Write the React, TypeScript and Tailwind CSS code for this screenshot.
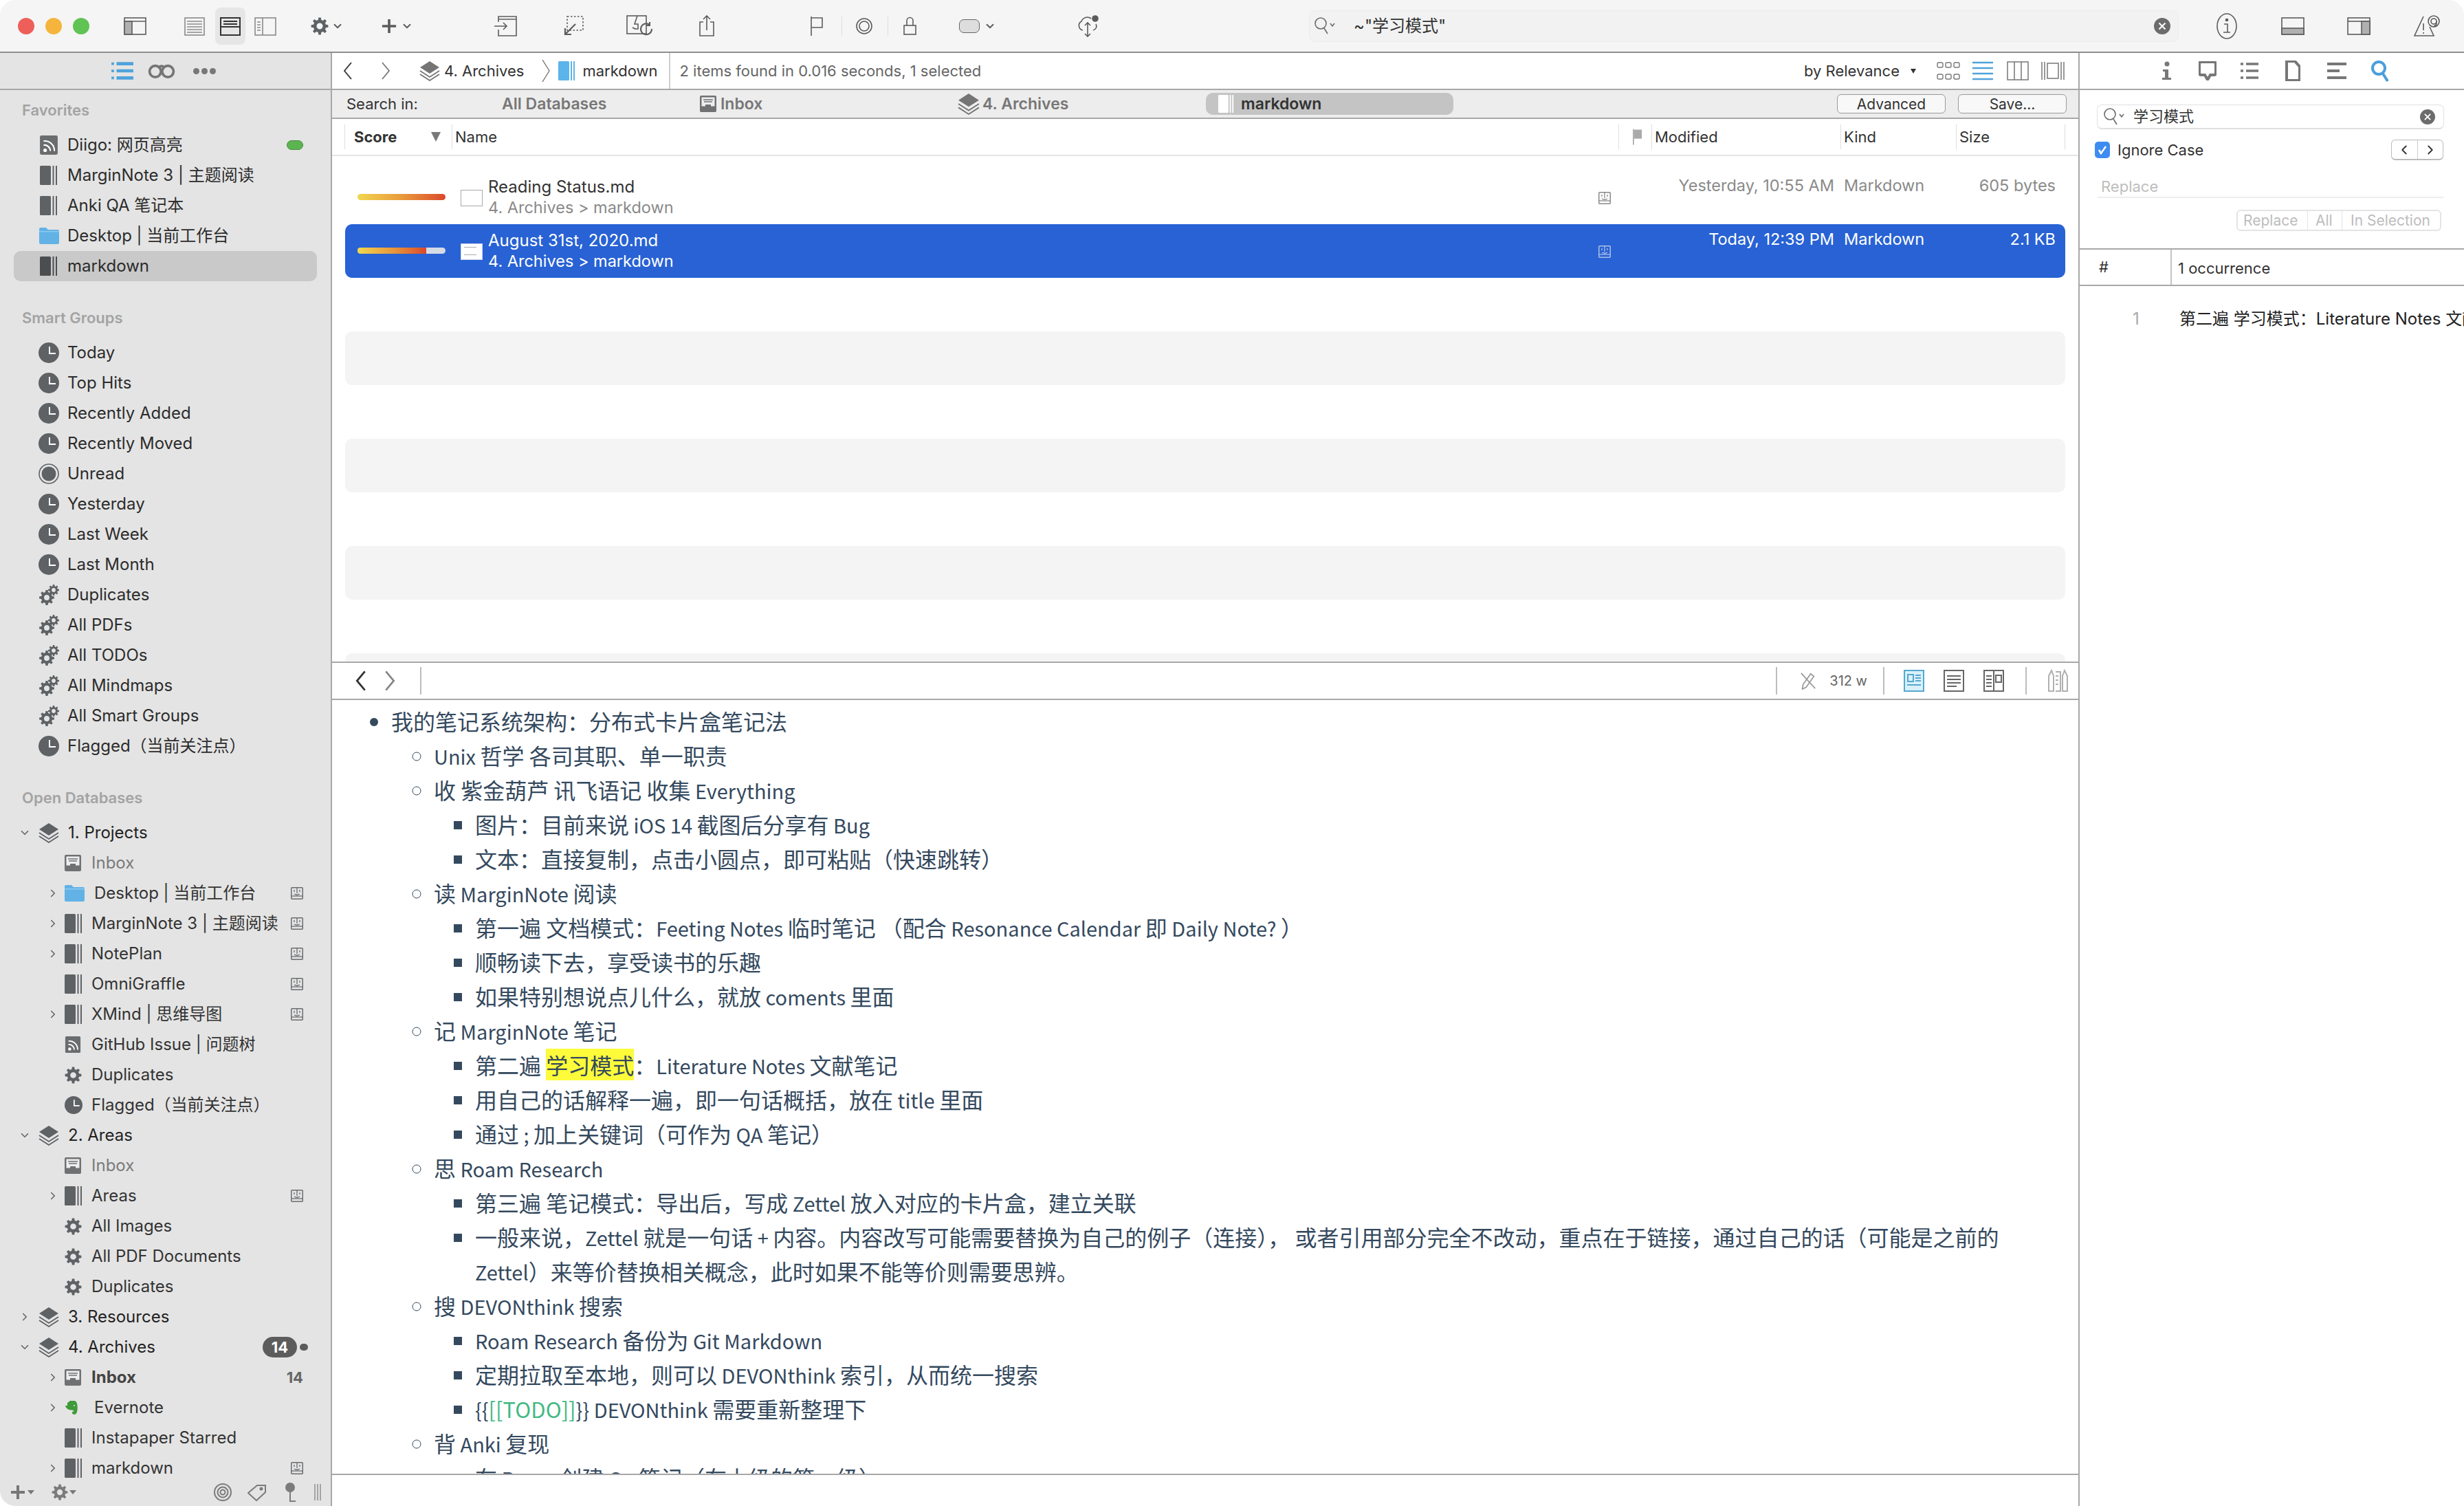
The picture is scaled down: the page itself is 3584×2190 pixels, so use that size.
import React from 'react';
import { ChevronLeft, ChevronRight, ChevronDown } from 'lucide-react';

// gear outline used by toolbar + sidebar
const gearPath = (cx: number, cy: number, r: number, teeth = 8) => {
  let d = '';
  const step = (Math.PI * 2) / teeth;
  for (let i = 0; i < teeth; i++) {
    const a = i * step;
    const pts = [
      [a - step * 0.32, r * 0.74],
      [a - step * 0.18, r],
      [a + step * 0.18, r],
      [a + step * 0.32, r * 0.74],
    ];
    pts.forEach(([t, rad]) => {
      d += `${d ? 'L' : 'M'}${(cx + Math.cos(t) * rad).toFixed(2)} ${(cy + Math.sin(t) * rad).toFixed(2)}`;
    });
  }
  d += 'Z';
  const h = r * 0.36;
  d += `M${cx + h} ${cy}A${h} ${h} 0 1 0 ${cx - h} ${cy}A${h} ${h} 0 1 0 ${cx + h} ${cy}Z`;
  return d;
};

const Gear = ({ className = 'w-[26px] h-[26px]', color = '#5f6265' }: { className?: string; color?: string }) => (
  <svg viewBox="0 0 26 26" className={className}>
    <path d={gearPath(13, 13, 12.5)} fill={color} fillRule="evenodd" />
  </svg>
);

const Gears = () => (
  <svg viewBox="0 0 29 30" className="w-[29px] h-[30px]">
    <path d={gearPath(11, 19, 11)} fill="#5f6265" fillRule="evenodd" />
    <path d={gearPath(21, 8, 8)} fill="#5f6265" fillRule="evenodd" />
  </svg>
);

const Clock = () => (
  <svg viewBox="0 0 30 30" className="w-[30px] h-[30px]">
    <circle cx="15" cy="15" r="15" fill="#5f6265" />
    <path d="M16 6v10h9" fill="none" stroke="#fff" strokeWidth="2" />
  </svg>
);

const Unread = () => (
  <svg viewBox="0 0 30 30" className="w-[30px] h-[30px]">
    <circle cx="15" cy="15" r="14" fill="none" stroke="#5f6265" strokeWidth="1.6" />
    <circle cx="15" cy="15" r="10.5" fill="#5f6265" />
  </svg>
);

const Group = ({ color = '#5f6265' }: { color?: string }) => (
  <svg viewBox="0 0 26 28" className="w-[26px] h-[28px]">
    <rect x="0" y="0" width="16" height="28" rx="1.5" fill={color} />
    <rect x="18.5" y="0" width="2" height="28" fill={color} />
    <rect x="23" y="0" width="2" height="28" fill={color} />
  </svg>
);

const Rss = ({ className = 'w-[24px] h-[26px]' }: { className?: string }) => (
  <svg viewBox="0 0 24 26" className={className}>
    <rect width="24" height="26" rx="2" fill="#6a6c6e" />
    <circle cx="7" cy="20" r="2.4" fill="#fff" />
    <path d="M5 13a8 8 0 0 1 9 8M5 7.5a13 13 0 0 1 14.5 13.5" fill="none" stroke="#fff" strokeWidth="2" />
  </svg>
);

const InboxIcon = ({ className = 'w-[24px] h-[24px]', tint = '#6f7173' }: { className?: string; tint?: string }) => (
  <svg viewBox="0 0 24 24" className={className}>
    <rect width="24" height="24" rx="2" fill={tint} />
    <rect x="2.5" y="2.5" width="19" height="13" fill="#eee" />
    <path d="M5 6h14M6 9h12" stroke={tint} strokeWidth="1.4" />
    <path d="M8 13h8v3.5H8z" fill={tint} />
  </svg>
);

const Stack = ({ className = 'w-[30px] h-[30px]', color = '#5f6265' }: { className?: string; color?: string }) => (
  <svg viewBox="0 0 30 30" className={className}>
    <path d="M15 1 29 10 15 19 1 10Z" fill={color} />
    <path d="M1 15l14 9 14-9M1 20l14 9 14-9" fill="none" stroke={color} strokeWidth="1.8" />
  </svg>
);

const Folder = ({ className = 'w-[29px] h-[24px]' }: { className?: string }) => (
  <svg viewBox="0 0 29 24" className={className}>
    <path d="M0 2a2 2 0 0 1 2-2h8l3 3h14a2 2 0 0 1 2 2v17a2 2 0 0 1-2 2H2a2 2 0 0 1-2-2Z" fill="#62b2e6" />
    <rect x="0" y="5" width="29" height="1.4" fill="#8fcaf0" />
  </svg>
);

const Evernote = () => (
  <svg viewBox="0 0 20 22" className="w-[20px] h-[22px]">
    <path d="M4 4 8 1h6c3 0 4 3 4.500 7 .5 5 0 10-2 12-2 1.500-5 1-5.500-1-.5-2 1-3 3-2.500-1-2-3-2-5-2C5 14 2 12 1 8h3Z" fill="#3f9a38" />
    <circle cx="14" cy="8" r="1" fill="#e4e4e4" />
  </svg>
);

const SyncBook = ({ color = '#6a6c6e' }: { color?: string }) => (
  <svg viewBox="0 0 18 18" className="w-[18px] h-[18px] shrink-0">
    <rect x=".75" y=".75" width="16.500" height="16.500" rx="1" fill="none" stroke={color} strokeWidth="1.500" />
    <path d="M1 13h16" stroke={color} strokeWidth="1.300" />
    <path d="M9 1v8" stroke={color} strokeWidth="1.300" />
    <path d="M5 4v3M13 4v3M5 10q4 2.500 8 0" fill="none" stroke={color} strokeWidth="1.300" />
  </svg>
);

const ToolIcon = ({ w, h = 28, className = '', children }: { w: number; h?: number; className?: string; children: React.ReactNode }) => (
  <svg viewBox={`0 0 ${w} ${h}`} width={w} height={h} className={`shrink-0 ${className}`} fill="none" stroke="#5c5c5c" strokeWidth="1.600">
    {children}
  </svg>
);

const ClearX = ({ size = 'w-[24px] h-[24px]' }: { size?: string }) => (
  <svg viewBox="0 0 24 24" className={size}>
    <circle cx="12" cy="12" r="12" fill="#6c6c6c" />
    <path d="M7.500 7.500l9 9M16.500 7.500l-9 9" stroke="#fff" strokeWidth="2" />
  </svg>
);

const SearchGlyph = () => (
  <svg viewBox="0 0 32 30" className="w-[32px] h-[30px] shrink-0" fill="none" stroke="#6c6c6c" strokeWidth="1.600">
    <circle cx="10" cy="11" r="8" />
    <path d="M15 18l5 8" />
    <path d="M24 11l3 4 3-4" />
  </svg>
);

// the tall thin back/forward angle used in the path and preview bars
const Angle = ({ dir, className, color, weight = 1.8 }: { dir: 'l' | 'r'; className: string; color: string; weight?: number }) => (
  <svg viewBox="0 0 14 26" className={className} fill="none" stroke={color} strokeWidth={weight}>
    <path d={dir === 'l' ? 'M12 1 2 13l10 12' : 'M2 1l10 12L2 25'} />
  </svg>
);

const Toolbar = () => (
  <div className="h-[75px] shrink-0 bg-[#f5f5f5] flex items-center pl-[26px] text-[#5c5c5c]">
    <div className="w-[24px] h-[24px] rounded-full bg-[#ee5f5a]" />
    <div className="w-[24px] h-[24px] rounded-full bg-[#f5b53d] ml-[16px]" />
    <div className="w-[24px] h-[24px] rounded-full bg-[#5fc454] ml-[16px]" />
    <ToolIcon w={33} className="ml-[50px]">
      <rect x="1" y="2" width="31" height="24" />
      <path d="M1 7h31" />
      <rect x="1" y="7" width="11" height="19" fill="#b0b0b0" />
    </ToolIcon>
    <ToolIcon w={30} className="ml-[55px]">
      <rect x="1" y="2" width="28" height="25" stroke="#8a8a8a" />
      <path d="M4 7h22M4 11h22M4 15h22M4 19h22M4 23h22" stroke="#8a8a8a" />
    </ToolIcon>
    <div className="ml-[15px] w-[44px] h-[54px] rounded-[8px] bg-[#e6e6e6] flex items-center justify-center">
      <ToolIcon w={30}>
        <rect x="1" y="2" width="28" height="25" stroke="#333" strokeWidth="2" />
        <path d="M1 15h28M5 7h20M5 11h20" stroke="#333" strokeWidth="2" />
      </ToolIcon>
    </div>
    <ToolIcon w={32} className="ml-[13px]">
      <rect x="1" y="2" width="30" height="25" stroke="#8a8a8a" />
      <path d="M12 2v25M4 8h5M4 12h5M4 16h5M4 20h5" stroke="#8a8a8a" />
    </ToolIcon>
    <div className="ml-[50px] flex items-center gap-[4px]">
      <Gear className="w-[26px] h-[26px]" />
      <ChevronDown className="w-[18px] h-[18px]" strokeWidth={2.500} />
    </div>
    <div className="ml-[55px] flex items-center gap-[6px]">
      <svg viewBox="0 0 24 24" className="w-[22px] h-[22px]"><path d="M12 1v22M1 12h22" stroke="#5c5c5c" strokeWidth="4" /></svg>
      <ChevronDown className="w-[18px] h-[18px]" strokeWidth={2.500} />
    </div>
    <ToolIcon w={34} h={30} className="ml-[118px]">
      <path d="M6 9V1h26v28H6v-9M6 5h26M0 15h18M13 10l5 5-5 5" />
    </ToolIcon>
    <ToolIcon w={30} h={30} className="ml-[66px]">
      <rect x="6" y="1" width="23" height="20" strokeDasharray="2.500 2.500" />
      <path d="M18 12 3 27M3 18v9h9" strokeWidth="2.200" />
    </ToolIcon>
    <ToolIcon w={40} h={32} className="ml-[62px]">
      <rect x="1" y="1" width="28" height="26" />
      <path d="M16 1l-4 12h5v7q-4 1-8-2" />
      <path d="M37 20a8 8 0 1 1-3-6M34 10v5h-5" strokeWidth="2" />
    </ToolIcon>
    <ToolIcon w={25} h={32} className="ml-[65px]">
      <path d="M7 10H2v20h20V10h-5M12 22V1M7 6l5-5 5 5" />
    </ToolIcon>
    <ToolIcon w={20} h={28} className="ml-[137px]">
      <path d="M2 0v28M2 2h16v14H2" />
    </ToolIcon>
    <div className="ml-[26px] w-[1px] h-[28px] bg-[#ddd]" />
    <ToolIcon w={24} className="ml-[20px]">
      <circle cx="12" cy="14" r="11" />
      <circle cx="12" cy="14" r="7" />
    </ToolIcon>
    <div className="ml-[22px] w-[1px] h-[28px] bg-[#ddd]" />
    <ToolIcon w={19} className="ml-[22px]">
      <rect x="1" y="13" width="17" height="13" />
      <path d="M5 13V6a4.500 4.500 0 0 1 9 0v7" />
    </ToolIcon>
    <div className="ml-[62px] flex items-center gap-[6px]">
      <div className="w-[30px] h-[20px] rounded-[7px] border-[1.500px] border-[#666] bg-[#ddd]" />
      <ChevronDown className="w-[18px] h-[18px]" strokeWidth={2.500} />
    </div>
    <ToolIcon w={34} h={34} className="ml-[117px]">
      <path d="M9 23a7 7 0 0 1-2-13 9 9 0 0 1 14-4M28 14a6 6 0 0 1-4 9M16 12v20M12 16l4-4 4 4M12 28l4 4 4-4" />
      <circle cx="27" cy="6" r="4" fill="#5c5c5c" />
    </ToolIcon>
    <div className="ml-[305px] w-[1263px] h-[44px] rounded-[8px] bg-[#f2f2f2] shadow-[0_0_0_1px_#ececec] flex items-center px-[6px]">
      <SearchGlyph />
      <span className="ml-[26px] text-[24px] text-[#333] flex-1">~"学习模式"</span>
      <ClearX />
      <span className="w-[5px]" />
    </div>
    <ToolIcon w={30} h={38} className="ml-[56px]">
      <ellipse cx="15" cy="19" rx="14" ry="18" />
      <path d="M11 16h5v12M10 28h10" />
      <circle cx="15" cy="10" r="1.500" fill="#5c5c5c" />
    </ToolIcon>
    <ToolIcon w={34} className="ml-[64px]">
      <rect x="1" y="2" width="32" height="24" />
      <rect x="1" y="17" width="32" height="9" fill="#b0b0b0" />
    </ToolIcon>
    <ToolIcon w={34} className="ml-[62px]">
      <rect x="1" y="2" width="32" height="24" />
      <path d="M1 7h32" />
      <rect x="21" y="7" width="12" height="19" fill="#b0b0b0" />
    </ToolIcon>
    <ToolIcon w={38} h={34} className="ml-[63px]">
      <path d="M14 3 1 31h28l-6-13M14 13v10M14 26v2" />
      <circle cx="29" cy="10" r="8" fill="#f5f5f5" />
      <circle cx="29" cy="10" r="4" fill="none" />
      <path d="M33 10v4q-2 3-4 3" />
    </ToolIcon>
  </div>
);

const Row = ({ icon, label, right, selected }: { icon: React.ReactNode; label: string; right?: React.ReactNode; selected?: boolean }) => (
  <div className={`h-[44px] mx-[20px] pl-[36px] pr-[20px] rounded-[10px] flex items-center ${selected ? 'bg-[#c9c9c9]' : ''}`}>
    <div className="w-[30px] flex justify-center shrink-0">{icon}</div>
    <span className="ml-[12px] flex-1 text-[24px] text-[#2c2c2c] whitespace-nowrap">{label}</span>
    {right}
  </div>
);

const SectionLabel = ({ children, className = '' }: { children: React.ReactNode; className?: string }) => (
  <div className={`h-[30px] mb-[14px] pl-[32px] text-[22px] leading-[30px] font-semibold text-[#a3a3a3] ${className}`}>{children}</div>
);

type DbItem = {
  label: string;
  level?: 0 | 1;
  arrow?: 'open' | 'closed';
  icon: 'stack' | 'inbox' | 'folder' | 'group' | 'rss' | 'gear' | 'clock' | 'evernote';
  sync?: boolean;
  muted?: boolean;
  bold?: boolean;
  right?: React.ReactNode;
};

const dbItems: DbItem[] = [
  { label: '1. Projects', level: 0, arrow: 'open', icon: 'stack' },
  { label: 'Inbox', icon: 'inbox', muted: true },
  { label: 'Desktop | 当前工作台', icon: 'folder', arrow: 'closed', sync: true },
  { label: 'MarginNote 3 | 主题阅读', icon: 'group', arrow: 'closed', sync: true },
  { label: 'NotePlan', icon: 'group', arrow: 'closed', sync: true },
  { label: 'OmniGraffle', icon: 'group', sync: true },
  { label: 'XMind | 思维导图', icon: 'group', arrow: 'closed', sync: true },
  { label: 'GitHub Issue | 问题树', icon: 'rss' },
  { label: 'Duplicates', icon: 'gear' },
  { label: 'Flagged（当前关注点）', icon: 'clock' },
  { label: '2. Areas', level: 0, arrow: 'open', icon: 'stack' },
  { label: 'Inbox', icon: 'inbox', muted: true },
  { label: 'Areas', icon: 'group', arrow: 'closed', sync: true },
  { label: 'All Images', icon: 'gear' },
  { label: 'All PDF Documents', icon: 'gear' },
  { label: 'Duplicates', icon: 'gear' },
  { label: '3. Resources', level: 0, arrow: 'closed', icon: 'stack' },
  {
    label: '4. Archives',
    level: 0,
    arrow: 'open',
    icon: 'stack',
    right: (
      <div className="flex items-center gap-[4px] mr-[-7px]">
        <span className="w-[50px] h-[30px] rounded-full bg-[#5c5c5c] text-white text-[22px] font-bold flex items-center justify-center">14</span>
        <span className="w-[12px] h-[10px] rounded-full bg-[#5c5c5c]" />
      </div>
    ),
  },
  { label: 'Inbox', icon: 'inbox', arrow: 'closed', bold: true, right: <span className="text-[22px] font-bold text-[#666]">14</span> },
  { label: 'Evernote', icon: 'evernote', arrow: 'closed' },
  { label: 'Instapaper Starred', icon: 'group' },
  { label: 'markdown', icon: 'group', arrow: 'closed', sync: true },
];

const dbIcon = (item: DbItem) => {
  switch (item.icon) {
    case 'stack':
      return <Stack />;
    case 'inbox':
      return <InboxIcon className="w-[24px] h-[24px]" />;
    case 'folder':
      return <Folder />;
    case 'group':
      return <Group />;
    case 'rss':
      return <Rss className="w-[24px] h-[24px]" />;
    case 'gear':
      return <Gear className="w-[25px] h-[25px]" />;
    case 'clock':
      return (
        <svg viewBox="0 0 30 30" className="w-[26px] h-[26px]">
          <circle cx="15" cy="15" r="15" fill="#5f6265" />
          <path d="M16 6v10h9" fill="none" stroke="#fff" strokeWidth="2" />
        </svg>
      );
    default:
      return <Evernote />;
  }
};

const DbRow = ({ item }: { item: DbItem }) => {
  const top = item.level === 0;
  const chevron =
    item.arrow === 'open' ? (
      <ChevronDown className="w-[18px] h-[18px] text-[#666]" strokeWidth={2.200} />
    ) : item.arrow === 'closed' ? (
      <ChevronRight className="w-[18px] h-[18px] text-[#666]" strokeWidth={2.200} />
    ) : null;
  return (
    <div className={`h-[44px] flex items-center pr-[40px] ${top ? 'pl-[27px]' : 'pl-[68px]'}`}>
      <div className={`shrink-0 ${top ? 'w-[29px]' : 'w-[26px]'}`}>{chevron}</div>
      <div className={`shrink-0 ${top ? 'w-[43px]' : item.icon === 'folder' || item.icon === 'evernote' ? 'w-[43px]' : 'w-[39px]'}`}>{dbIcon(item)}</div>
      <span
        className={`flex-1 text-[24px] whitespace-nowrap ${item.bold ? 'font-bold text-[#444]' : item.muted ? 'text-[#7a7a7a]' : top ? 'text-[#222]' : 'text-[#333]'}`}
      >
        {item.label}
      </span>
      {item.sync && <SyncBook />}
      {item.right}
    </div>
  );
};

const smartItems: [string, 'clock' | 'unread' | 'gears'][] = [
  ['Today', 'clock'],
  ['Top Hits', 'clock'],
  ['Recently Added', 'clock'],
  ['Recently Moved', 'clock'],
  ['Unread', 'unread'],
  ['Yesterday', 'clock'],
  ['Last Week', 'clock'],
  ['Last Month', 'clock'],
  ['Duplicates', 'gears'],
  ['All PDFs', 'gears'],
  ['All TODOs', 'gears'],
  ['All Mindmaps', 'gears'],
  ['All Smart Groups', 'gears'],
  ['Flagged（当前关注点）', 'clock'],
];

const Sidebar = () => (
  <div className="w-[481px] shrink-0 bg-[#e4e4e4] flex flex-col">
    <div className="h-[52px] shrink-0 flex items-center pl-[161px] gap-[19px]">
      <svg viewBox="0 0 34 32" className="w-[34px] h-[30px]">
        <path d="M8 5h26M8 16h26M8 27h26" stroke="#4fa3db" strokeWidth="5" />
        <path d="M0 5h4M0 16h4M0 27h4" stroke="#4fa3db" strokeWidth="4" />
      </svg>
      <svg viewBox="0 0 42 24" className="w-[42px] h-[22px]" fill="none" stroke="#757575" strokeWidth="4">
        <circle cx="11" cy="13" r="9" />
        <circle cx="31" cy="13" r="9" />
        <path d="M17 6q4-3 8 0" />
      </svg>
      <div className="flex gap-[3px] ml-[6px]">
        <span className="w-[9px] h-[9px] rounded-full bg-[#777]" />
        <span className="w-[9px] h-[9px] rounded-full bg-[#777]" />
        <span className="w-[9px] h-[9px] rounded-full bg-[#777]" />
      </div>
    </div>
    <div className="h-[2px] shrink-0 bg-[#a8a8a8]" />
    <div className="flex-1 overflow-hidden pt-[14px]">
      <SectionLabel>Favorites</SectionLabel>
      <Row
        icon={<Rss className="w-[28px] h-[28px]" />}
        label="Diigo: 网页高亮"
        right={<span className="w-[24px] h-[14px] rounded-full bg-[#5bb450] border border-[#4a8f42]" />}
      />
      <Row icon={<Group />} label="MarginNote 3 | 主题阅读" />
      <Row icon={<Group />} label="Anki QA 笔记本" />
      <Row icon={<Folder className="w-[29px] h-[26px]" />} label="Desktop | 当前工作台" />
      <Row icon={<Group color="#4b4d4f" />} label="markdown" selected />
      <SectionLabel className="mt-[38px]">Smart Groups</SectionLabel>
      {smartItems.map(([label, kind]) => (
        <Row key={label + kind} icon={kind === 'clock' ? <Clock /> : kind === 'unread' ? <Unread /> : <Gears />} label={label} />
      ))}
      <SectionLabel className="mt-[38px]">Open Databases</SectionLabel>
      {dbItems.map((item, i) => (
        <DbRow key={i} item={item} />
      ))}
    </div>
    <div className="h-[40px] shrink-0 flex items-center pl-[16px] text-[#777]">
      <svg viewBox="0 0 20 20" className="w-[20px] h-[20px]"><path d="M10 0v20M0 10h20" stroke="#777" strokeWidth="4" /></svg>
      <span className="ml-[4px] border-x-[5px] border-x-transparent border-t-[6px] border-t-[#777]" />
      <Gear className="w-[24px] h-[24px] ml-[25px]" color="#7b7b7b" />
      <span className="ml-[2px] border-x-[5px] border-x-transparent border-t-[6px] border-t-[#777]" />
      <svg viewBox="0 0 26 26" className="w-[26px] h-[26px] ml-[200px]" fill="none" stroke="#7b7b7b" strokeWidth="2">
        <circle cx="13" cy="13" r="12" />
        <circle cx="13" cy="13" r="7.500" />
        <circle cx="13" cy="13" r="3.500" />
      </svg>
      <svg viewBox="0 0 28 26" className="w-[28px] h-[26px] ml-[23px]" fill="none" stroke="#7b7b7b" strokeWidth="2">
        <path d="M1 14 14 3h12v10L13 25Z" />
        <circle cx="20" cy="8" r="1.500" fill="#7b7b7b" />
      </svg>
      <svg viewBox="0 0 16 28" className="w-[16px] h-[28px] ml-[27px]" fill="none" stroke="#7b7b7b" strokeWidth="2">
        <circle cx="7" cy="7" r="6" fill="#7b7b7b" />
        <path d="M7 13v14h8" />
      </svg>
      <svg viewBox="0 0 10 24" className="w-[10px] h-[24px] ml-[26px]" stroke="#7b7b7b" strokeWidth="1.200">
        <path d="M1 0v24M5 0v24M9 0v24" />
      </svg>
    </div>
  </div>
);

const PathBar = () => (
  <div className="h-[52px] shrink-0 flex items-center bg-white">
    <Angle dir="l" className="ml-[16px] w-[14px] h-[26px]" color="#333" />
    <Angle dir="r" className="ml-[41px] w-[14px] h-[26px]" color="#777" />
    <Stack className="ml-[42px] w-[30px] h-[30px]" color="#757575" />
    <span className="ml-[6px] text-[22px] text-[#333]">4. Archives</span>
    <svg viewBox="0 0 12 32" className="ml-[26px] w-[12px] h-[32px]" fill="none" stroke="#777" strokeWidth="1.400"><path d="M1 0l10 16L1 32" /></svg>
    <svg viewBox="0 0 26 28" className="ml-[12px] w-[26px] h-[28px]">
      <rect width="16" height="28" rx="1.500" fill="#5bb4ea" />
      <rect x="18" width="2" height="28" fill="#5bb4ea" />
      <rect x="22" width="2" height="28" fill="#5bb4ea" />
    </svg>
    <span className="ml-[9px] text-[22px] text-[#333]">markdown</span>
    <div className="ml-[17px] w-[2px] h-[52px] bg-[#cfcfcf]" />
    <span className="ml-[13px] text-[22px] text-[#666]">2 items found in 0.016 seconds, 1 selected</span>
    <div className="flex-1" />
    <span className="text-[22px] text-[#333]">by Relevance</span>
    <span className="ml-[16px] border-x-[4px] border-x-transparent border-t-[7px] border-t-[#333]" />
    <svg viewBox="0 0 34 30" className="ml-[30px] w-[34px] h-[30px]" fill="none" stroke="#777" strokeWidth="1.400">
      {[1, 13, 25].map((x) => [3, 20].map((y) => <rect key={`${x}-${y}`} x={x} y={y} width="8" height="7" rx="2" />))}
    </svg>
    <svg viewBox="0 0 30 30" className="ml-[18px] w-[30px] h-[30px]" stroke="#4fa3db" strokeWidth="2.400">
      <path d="M0 3h30M0 11h30M0 19h30M0 27h30" />
    </svg>
    <svg viewBox="0 0 32 30" className="ml-[20px] w-[32px] h-[30px]" fill="none" stroke="#777" strokeWidth="1.500">
      <rect x="1" y="2" width="30" height="26" />
      <path d="M11 2v26M21 2v26" />
    </svg>
    <svg viewBox="0 0 34 30" className="ml-[18px] w-[34px] h-[30px]" fill="none" stroke="#777" strokeWidth="1.500">
      <rect x="9" y="4" width="16" height="22" />
      <path d="M1 2v26M5 2v26M29 2v26M33 2v26" />
    </svg>
    <span className="w-[20px]" />
  </div>
);

const SearchScope = () => (
  <div className="h-[40px] shrink-0 bg-[#ededed] flex items-center text-[22px] whitespace-nowrap">
    <span className="ml-[21px] text-[#333] w-[103px] shrink-0">Search in:</span>
    <span className="ml-[123px] w-[152px] shrink-0 text-[23px] font-semibold text-[#777]">All Databases</span>
    <InboxIcon className="ml-[136px] w-[24px] h-[28px]" />
    <span className="ml-[6px] w-[62px] shrink-0 text-[23px] font-semibold text-[#777]">Inbox</span>
    <Stack className="ml-[283px] w-[32px] h-[32px]" color="#757575" />
    <span className="ml-[4px] w-[124px] shrink-0 text-[23px] font-semibold text-[#777]">4. Archives</span>
    <div className="ml-[201px] w-[360px] h-[32px] rounded-[10px] bg-[#c4c4c4] flex items-center pl-[18px]">
      <svg viewBox="0 0 26 28" className="w-[24px] h-[26px]">
        <rect width="16" height="28" rx="1.500" fill="#fff" />
        <rect x="18" width="2" height="28" fill="#fff" />
        <rect x="22" width="2" height="28" fill="#fff" />
      </svg>
      <span className="ml-[9px] text-[23px] font-semibold text-[#333]">markdown</span>
    </div>
    <div className="flex-1" />
    <button className="w-[158px] h-[28px] rounded-[6px] bg-[#f8f8f8] border border-[#9a9a9a] text-[21px] text-[#333] leading-none">Advanced</button>
    <button className="ml-[18px] mr-[17px] w-[158px] h-[28px] rounded-[6px] bg-[#f8f8f8] border border-[#9a9a9a] text-[21px] text-[#333] leading-none">Save...</button>
  </div>
);

const ColHead = ({ w, label, bold, children }: { w: string; label?: string; bold?: boolean; children?: React.ReactNode }) => (
  <div className={`${w} h-[36px] shrink-0 border-l border-[#dedede] flex items-center pl-[4px] text-[22px] text-[#333] ${bold ? 'font-bold' : ''}`}>
    {label}
    {children}
  </div>
);

const Columns = () => (
  <div className="h-[54px] shrink-0 bg-white border-b-2 border-[#e4e4e4] flex items-center pl-[18px]">
    <ColHead w="w-[156px]" bold>
      <span className="ml-[9px]">Score</span>
      <span className="ml-[50px] border-x-[7px] border-x-transparent border-t-[14px] border-t-[#7a7a7a]" />
    </ColHead>
    <ColHead w="w-[1697px]" label="Name" />
    <ColHead w="w-[48px]">
      <svg viewBox="0 0 16 26" className="ml-[16px] w-[14px] h-[24px]"><path d="M1 0v26" stroke="#aaa" strokeWidth="2" /><path d="M2 1h13v15H2z" fill="#aaa" /></svg>
    </ColHead>
    <ColHead w="w-[275px]" label="Modified" />
    <ColHead w="w-[168px]" label="Kind" />
    <ColHead w="w-[158px]" label="Size" />
    <div className="h-[36px] border-l border-[#dedede]" />
  </div>
);

const ResultRow = ({ name, score, date, size, selected }: { name: string; score: string; date: string; size: string; selected?: boolean }) => (
  <div className={`h-[78px] flex items-start rounded-[10px] ${selected ? 'bg-[#2862d4]' : ''}`}>
    <div className={`ml-[18px] mt-[34px] w-[128px] h-[9px] rounded-full overflow-hidden shrink-0 ${selected ? 'bg-[#d5dbe6]' : 'bg-[#e8e8e8]'}`}>
      <div className={`${score} h-full bg-linear-to-r from-[#f1d64f] via-[#e89a3c] to-[#d9472b]`} />
    </div>
    <div className={`ml-[22px] mt-[28px] w-[32px] h-[24px] shrink-0 border ${selected ? 'bg-white border-[#cfd8ee]' : 'bg-white border-[#a9a9a9]'}`}>
      {selected && <div className="mt-[4px] ml-[4px] w-[18px] h-[12px] border-y border-[#aaa]" />}
    </div>
    <div className="ml-[8px] w-[1615px] shrink-0 pt-[9px] text-[24px] leading-[30px] whitespace-nowrap">
      <div className={selected ? 'text-white' : 'text-[#333]'}>{name}</div>
      <div className={`text-[23.5px] ${selected ? 'text-white' : 'text-[#8a8a8a]'}`}>4. Archives &gt; markdown</div>
    </div>
    <div className="mt-[31px] w-[18px] shrink-0">
      <SyncBook color={selected ? '#aebfe8' : '#8a8a8a'} />
    </div>
    <div className={`ml-[10px] w-[315px] shrink-0 pt-[7px] text-right text-[23.5px] leading-[30px] whitespace-nowrap ${selected ? 'text-white' : 'text-[#8a8a8a]'}`}>{date}</div>
    <div className={`ml-[14px] shrink-0 pt-[7px] text-[23.5px] leading-[30px] ${selected ? 'text-white' : 'text-[#8a8a8a]'}`}>Markdown</div>
    <div className={`flex-1 pt-[7px] pr-[14px] text-right text-[23.5px] leading-[30px] ${selected ? 'text-white' : 'text-[#8a8a8a]'}`}>{size}</div>
  </div>
);

const ResultList = () => (
  <div className="h-[735px] shrink-0 overflow-hidden bg-white pt-[21px] pl-[19px] pr-[19px]">
    <ResultRow name="Reading Status.md" score="w-full" date="Yesterday, 10:55 AM" size="605 bytes" />
    <ResultRow name="August 31st, 2020.md" score="w-[78%]" date="Today, 12:39 PM" size="2.1 KB" selected />
    <div className="h-[78px]" />
    {[0, 1, 2, 3].map((i) => (
      <div key={i}>
        <div className="h-[78px] rounded-[10px] bg-[#f4f4f4]" />
        <div className="h-[78px]" />
      </div>
    ))}
  </div>
);

const DetailBar = () => (
  <div className="h-[52px] shrink-0 bg-white flex items-center text-[#666]">
    <Angle dir="l" className="ml-[34px] w-[16px] h-[30px]" color="#333" weight={2.400} />
    <Angle dir="r" className="ml-[26px] w-[16px] h-[30px]" color="#888" weight={2.400} />
    <div className="ml-[36px] w-[2px] h-[40px] bg-[#bdbdbd]" />
    <div className="flex-1" />
    <div className="w-[2px] h-[40px] bg-[#bdbdbd]" />
    <svg viewBox="0 0 24 28" className="ml-[33px] w-[24px] h-[26px]" fill="none" stroke="#999" strokeWidth="1.800">
      <path d="M4 20 16 3l5 4L9 24l-6 3ZM1 2l22 24" />
    </svg>
    <span className="ml-[19px] text-[20px] text-[#666]">312 w</span>
    <div className="ml-[23px] w-[2px] h-[40px] bg-[#bdbdbd]" />
    <svg viewBox="0 0 30 32" className="ml-[28px] w-[30px] h-[32px]" fill="#d9f0fa" stroke="#55a8cf" strokeWidth="2">
      <rect x="1" y="1" width="28" height="30" />
      <rect x="6" y="7" width="8" height="10" />
      <path d="M17 8h8M17 12h8M17 16h8M5 22h20" fill="none" />
    </svg>
    <svg viewBox="0 0 30 32" className="ml-[28px] w-[30px] h-[32px]" fill="none" stroke="#666" strokeWidth="2">
      <rect x="1" y="1" width="28" height="30" />
      <path d="M5 9h20M5 14h20M5 19h20M5 24h14" />
    </svg>
    <svg viewBox="0 0 30 32" className="ml-[28px] w-[30px] h-[32px]" fill="none" stroke="#666" strokeWidth="2">
      <rect x="1" y="1" width="28" height="30" />
      <path d="M15 1v30M4 9h8M4 14h8M4 19h8M4 24h8" />
      <rect x="18" y="8" width="8" height="10" />
    </svg>
    <div className="ml-[31px] w-[2px] h-[40px] bg-[#bdbdbd]" />
    <svg viewBox="0 0 30 34" className="ml-[30px] mr-[15px] w-[30px] h-[34px]" fill="none" stroke="#b0b0b0" strokeWidth="2">
      <path d="M2 32V10l4-8 3 8v22ZM12 4h7v28h-7M12 10h4M12 16h4M12 22h4M22 32V10l3-8 4 8v22Z" />
    </svg>
  </div>
);

// latin runs in the note preview sit smaller than the CJK around them
const L = ({ children }: { children: React.ReactNode }) => <span className="text-[29px] leading-[0]">{children}</span>;

const Doc = () => (
  <div className="flex-1 overflow-hidden bg-white pt-[5px] pr-[70px] text-[32px] leading-[50px] text-[#34495e] font-['Noto_Sans_CJK_SC',sans-serif]">
    <ul className="list-disc pl-[86px]">
      <li>
        我的笔记系统架构：分布式卡片盒笔记法
        <ul className="list-[circle] pl-[62px]">
          <li><L>Unix </L>哲学 各司其职、单一职责</li>
          <li>
            收 紫金葫芦 讯飞语记 收集<L> Everything</L>
            <ul className="list-[square] pl-[60px]">
              <li>图片：目前来说<L> iOS 14 </L>截图后分享有<L> Bug</L></li>
              <li>文本：直接复制，点击小圆点，即可粘贴（快速跳转）</li>
            </ul>
          </li>
          <li>
            读<L> MarginNote </L>阅读
            <ul className="list-[square] pl-[60px]">
              <li>第一遍 文档模式：<L>Feeting Notes </L>临时笔记 （配合<L> Resonance Calendar </L>即<L> Daily Note? </L>）</li>
              <li>顺畅读下去，享受读书的乐趣</li>
              <li>如果特别想说点儿什么，就放<L> coments </L>里面</li>
            </ul>
          </li>
          <li>
            记<L> MarginNote </L>笔记
            <ul className="list-[square] pl-[60px]">
              <li>
                第二遍 <mark className="bg-[#fdfb3a] text-[#34495e]">学习模式</mark>：<L>Literature Notes </L>文献笔记
              </li>
              <li>用自己的话解释一遍，即一句话概括，放在<L> title </L>里面</li>
              <li>通过<L> ; </L>加上关键词（可作为<L> QA </L>笔记）</li>
            </ul>
          </li>
          <li>
            思<L> Roam Research</L>
            <ul className="list-[square] pl-[60px]">
              <li>第三遍 笔记模式：导出后，写成<L> Zettel </L>放入对应的卡片盒，建立关联</li>
              <li>
                一般来说，<L>Zettel </L>就是一句话<L> + </L>内容。内容改写可能需要替换为自己的例子（连接）， 或者引用部分完全不改动，重点在于链接，通过自己的话（可能是之前的<L> Zettel</L>）来等价替换相关概念，此时如果不能等价则需要思辨。
              </li>
            </ul>
          </li>
          <li>
            搜<L> DEVONthink </L>搜索
            <ul className="list-[square] pl-[60px]">
              <li><L>Roam Research </L>备份为<L> Git Markdown</L></li>
              <li>定期拉取至本地，则可以<L> DEVONthink </L>索引，从而统一搜索</li>
              <li>
                <L>{'{{'}</L>
                <span className="text-[31px] leading-[0] text-[#42b983]">[[TODO]]</span>
                <L>{'}} DEVONthink '}</L>需要重新整理下
              </li>
            </ul>
          </li>
          <li>
            背<L> Anki </L>复现
            <ul className="list-[square] pl-[60px]">
              <li>在<L> Roam </L>创建<L> Q:: </L>笔记（在上级的第一级）</li>
            </ul>
          </li>
        </ul>
      </li>
    </ul>
  </div>
);

const Inspector = () => (
  <div className="flex-1 min-w-0 bg-white flex flex-col overflow-hidden">
    <div className="h-[52px] shrink-0 flex items-center pl-[119px] text-[#777]">
      <svg viewBox="0 0 16 28" className="w-[16px] h-[28px]"><circle cx="8" cy="4" r="3.500" fill="#777" /><path d="M2 12h8v12h4v3H1v-3h4v-9H2Z" fill="#777" /></svg>
      <svg viewBox="0 0 26 28" className="ml-[38px] w-[26px] h-[28px]"><path d="M4 1h18q3 0 3 3v13q0 3-3 3h-5l-4 7-4-7H4q-3 0-3-3V4q0-3 3-3Z" fill="none" stroke="#777" strokeWidth="4" /></svg>
      <svg viewBox="0 0 26 28" className="ml-[35px] w-[26px] h-[28px]" stroke="#777" strokeWidth="3.500"><path d="M0 4h4M8 4h18M0 14h4M8 14h18M0 24h4M8 24h18" /></svg>
      <svg viewBox="0 0 22 30" className="ml-[39px] w-[22px] h-[30px]"><path d="M2 1h12l7 8v20H2Z" fill="none" stroke="#777" strokeWidth="4" /></svg>
      <svg viewBox="0 0 28 26" className="ml-[39px] w-[28px] h-[26px]" stroke="#777" strokeWidth="4"><path d="M0 3h28M0 13h18M0 23h28" /></svg>
      <svg viewBox="0 0 28 32" className="ml-[35px] w-[28px] h-[32px]" fill="none" stroke="#4a9edc" strokeWidth="4"><circle cx="12" cy="12" r="9" /><path d="M18 20l7 11" /></svg>
    </div>
    <div className="h-[2px] shrink-0 bg-[#a8a8a8]" />
    <div className="h-[230px] shrink-0 pt-[22px] pl-[22px] pr-[30px]">
      <div className="ml-[4px] h-[33px] rounded-[6px] bg-white shadow-[0_0_0_1px_#e2e2e2,0_2px_0_#ddd] flex items-center pl-[8px] pr-[12px]">
        <SearchGlyph />
        <span className="ml-[12px] text-[22px] text-[#333] flex-1">学习模式</span>
        <ClearX size="w-[22px] h-[22px]" />
      </div>
      <div className="mt-[17px] h-[30px] flex items-center">
        <div className="w-[22px] h-[24px] rounded-[5px] bg-[#3f8cf0] flex items-center justify-center">
          <svg viewBox="0 0 16 16" className="w-[16px] h-[16px]" fill="none" stroke="#fff" strokeWidth="2.500"><path d="M3 8l3 5 7-10" /></svg>
        </div>
        <span className="ml-[11px] text-[22px] text-[#333] flex-1">Ignore Case</span>
        <div className="w-[76px] h-[30px] rounded-[6px] border border-[#bbb] border-b-2 flex text-[#333]">
          <div className="flex-1 flex items-center justify-center border-r border-[#ccc]"><ChevronLeft className="w-[22px] h-[22px]" /></div>
          <div className="flex-1 flex items-center justify-center"><ChevronRight className="w-[22px] h-[22px]" /></div>
        </div>
      </div>
      <div className="mt-[22px] ml-[4px] h-[33px] border-b-2 border-[#eee] pl-[5px] text-[22px] text-[#bdbdbd]">Replace</div>
      <div className="mt-[17px] ml-auto mr-[3px] w-[298px] h-[31px] rounded-[6px] border-2 border-[#e4e4e4] flex text-[21px] text-[#bdbdbd] items-center">
        <span className="w-[102px] pl-[8px] border-r border-[#e4e4e4]">Replace</span>
        <span className="w-[50px] pl-[11px] border-r border-[#e4e4e4]">All</span>
        <span className="pl-[12px]">In Selection</span>
      </div>
    </div>
    <div className="h-[2px] shrink-0 bg-[#a8a8a8]" />
    <div className="h-[51px] shrink-0 flex items-center text-[22px] text-[#333]">
      <span className="w-[134px] h-full pl-[28px] flex items-center border-r-2 border-[#c4c4c4]">#</span>
      <span className="ml-[9px] mt-[3px]">1 occurrence</span>
    </div>
    <div className="h-[2px] shrink-0 bg-[#a8a8a8]" />
    <div className="mt-[30px] flex items-center text-[24px] whitespace-nowrap">
      <span className="ml-[77px] w-[68px] shrink-0 text-[#aaa]">1</span>
      <span className="text-[#222]">第二遍 学习模式：Literature Notes 文献笔记</span>
    </div>
  </div>
);

const App = () => (
  <div className="w-[3584px] h-[2190px] bg-white overflow-hidden font-['Inter','Noto_Sans_CJK_SC',sans-serif]">
    <div className="h-full rounded-[22px] overflow-hidden flex flex-col">
      <Toolbar />
      <div className="h-[2px] shrink-0 bg-[#8f8f8f]" />
      <div className="flex-1 min-h-0 flex">
        <Sidebar />
        <div className="w-[2px] shrink-0 bg-[#a8a8a8]" />
        <div className="w-[2540px] shrink-0 flex flex-col">
          <PathBar />
          <div className="h-[2px] shrink-0 bg-[#a8a8a8]" />
          <SearchScope />
          <div className="h-[2px] shrink-0 bg-[#a8a8a8]" />
          <Columns />
          <ResultList />
          <div className="h-[2px] shrink-0 bg-[#a8a8a8]" />
          <DetailBar />
          <div className="h-[2px] shrink-0 bg-[#a8a8a8]" />
          <Doc />
          <div className="h-[2px] shrink-0 bg-[#a8a8a8]" />
          <div className="h-[45px] shrink-0 bg-white" />
        </div>
        <div className="w-[2px] shrink-0 bg-[#a8a8a8]" />
        <Inspector />
      </div>
    </div>
  </div>
);

export default App;
